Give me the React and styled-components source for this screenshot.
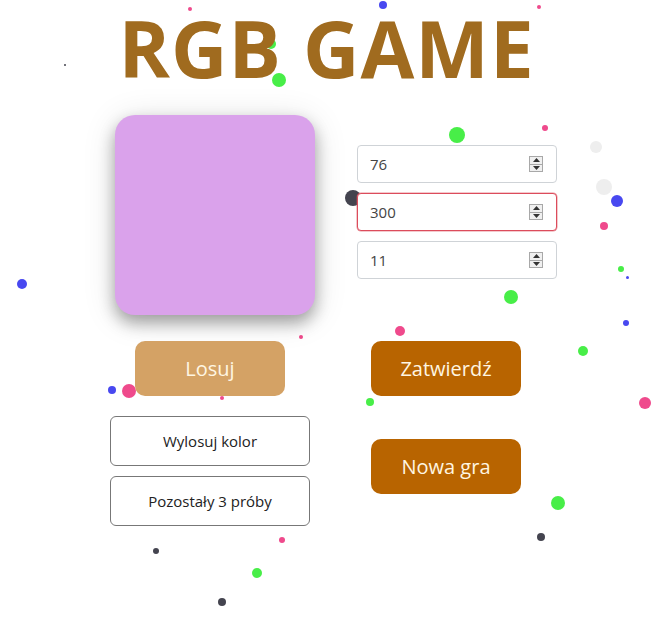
import React from 'react';
import styled, { createGlobalStyle } from 'styled-components';

const GlobalStyle = createGlobalStyle`
  html, body {
    margin: 0;
    padding: 0;
    background: #ffffff;
    font-family: "Open Sans", "Noto Sans", sans-serif;
  }
`;

// confetti dots floating behind the game
const dots = [
  { x: 190, y: 9, r: 2, c: '#ef4a8c' },
  { x: 383, y: 5, r: 4, c: '#4848f0' },
  { x: 539, y: 7, r: 2, c: '#ef4a8c' },
  { x: 65, y: 65, r: 1, c: '#44444f' },
  { x: 271, y: 44, r: 5, c: '#48ee48' },
  { x: 279, y: 80, r: 7, c: '#48ee48' },
  { x: 457, y: 135, r: 8, c: '#48ee48' },
  { x: 545, y: 128, r: 3, c: '#ef4a8c' },
  { x: 596, y: 147, r: 6, c: '#eeeeee' },
  { x: 604, y: 187, r: 8, c: '#eeeeee' },
  { x: 617, y: 201, r: 6, c: '#4848f0' },
  { x: 604, y: 226, r: 4, c: '#ef4a8c' },
  { x: 353, y: 198, r: 8, c: '#44444f' },
  { x: 22, y: 284, r: 5, c: '#4848f0' },
  { x: 621, y: 269, r: 3, c: '#48ee48' },
  { x: 627, y: 277, r: 1.5, c: '#4848f0' },
  { x: 511, y: 297, r: 7, c: '#48ee48' },
  { x: 626, y: 323, r: 3, c: '#4848f0' },
  { x: 301, y: 337, r: 2, c: '#ef4a8c' },
  { x: 400, y: 331, r: 5, c: '#ef4a8c' },
  { x: 583, y: 351, r: 5, c: '#48ee48' },
  { x: 112, y: 390, r: 4, c: '#4848f0' },
  { x: 129, y: 391, r: 7, c: '#ef4a8c' },
  { x: 222, y: 398, r: 2, c: '#ef4a8c' },
  { x: 370, y: 402, r: 4, c: '#48ee48' },
  { x: 645, y: 403, r: 6, c: '#ef4a8c' },
  { x: 558, y: 503, r: 7, c: '#48ee48' },
  { x: 541, y: 537, r: 4, c: '#44444f' },
  { x: 282, y: 540, r: 3, c: '#ef4a8c' },
  { x: 156, y: 551, r: 3, c: '#44444f' },
  { x: 257, y: 573, r: 5, c: '#48ee48' },
  { x: 222, y: 602, r: 4, c: '#44444f' },
];

const values = [
  { v: '76', invalid: false },
  { v: '300', invalid: true },
  { v: '11', invalid: false },
];

function Spinner() {
  return (
    <S.Spin>
      <S.SpinHalf>
        <svg width="7" height="4" viewBox="0 0 7 4">
          <path d="M0 4 L3.5 0 L7 4 Z" fill="#333" />
        </svg>
      </S.SpinHalf>
      <S.SpinHalf>
        <svg width="7" height="4" viewBox="0 0 7 4">
          <path d="M0 0 L3.5 4 L7 0 Z" fill="#333" />
        </svg>
      </S.SpinHalf>
    </S.Spin>
  );
}

export default function App() {
  return (
    <S.Page>
      <GlobalStyle />
      {dots.map((d, i) => (
        <S.Dot
          key={i}
          style={{
            left: d.x - d.r,
            top: d.y - d.r,
            width: d.r * 2,
            height: d.r * 2,
            background: d.c,
          }}
        />
      ))}
      <S.Content>
        <S.Title>RGB GAME</S.Title>
        <S.Board>
          <S.LeftColumn>
            <S.ColorBox $color="rgb(218, 162, 235)" />
            <S.GameButton $tone="light" $top={26}>Losuj</S.GameButton>
            <S.InfoButton $top={20}>Wylosuj kolor</S.InfoButton>
            <S.InfoButton $top={10}>Pozostały 3 próby</S.InfoButton>
          </S.LeftColumn>
          <S.RightColumn>
            <S.Inputs>
              {values.map((item, i) => (
                <S.Field key={i} $invalid={item.invalid}>
                  <S.NumberInput type="text" defaultValue={item.v} />
                  <Spinner />
                </S.Field>
              ))}
            </S.Inputs>
            <S.GameButton $top={62}>Zatwierdź</S.GameButton>
            <S.GameButton $top={43}>Nowa gra</S.GameButton>
          </S.RightColumn>
        </S.Board>
      </S.Content>
    </S.Page>
  );
}

const S = {
  Page: styled.div`
    position: relative;
    width: 100%;
    height: 619px;
    overflow: hidden;
  `,
  Dot: styled.span`
    position: absolute;
    border-radius: 50%;
    z-index: 0;
  `,
  Content: styled.div`
    position: relative;
    z-index: 1;
    display: flex;
    flex-direction: column;
  `,
  Title: styled.h1`
    margin: 1px 0 0;
    text-align: center;
    font-family: "Open Sans", "Noto Sans", sans-serif;
    font-weight: 700;
    font-size: 78px;
    line-height: 94px;
    letter-spacing: 1px;
    color: #a06b1f;
  `,
  Board: styled.div`
    display: grid;
    grid-template-columns: 200px 200px;
    column-gap: 47px;
    margin: 20px 0 0 110px;
  `,
  LeftColumn: styled.div`
    display: flex;
    flex-direction: column;
    align-items: center;
  `,
  RightColumn: styled.div`
    display: flex;
    flex-direction: column;
    align-items: flex-start;
    padding-top: 30px;
  `,
  ColorBox: styled.div`
    width: 200px;
    height: 200px;
    margin-left: 10px;
    border-radius: 20px;
    background: ${(p) => p.$color};
    box-shadow: 0 8px 16px rgba(0, 0, 0, 0.33), 0 4px 34px rgba(0, 0, 0, 0.12);
  `,
  Inputs: styled.div`
    display: flex;
    flex-direction: column;
    gap: 10px;
    width: 200px;
  `,
  Field: styled.label`
    display: flex;
    align-items: center;
    box-sizing: border-box;
    height: 38px;
    padding: 0 13px 0 12px;
    background: #ffffff;
    border: 1px solid ${(p) => (p.$invalid ? '#dc4c5c' : '#cfd3d7')};
    box-shadow: ${(p) => (p.$invalid ? '0 0 0 0.5px rgba(220, 76, 92, 0.6)' : 'none')};
    border-radius: 4px;
  `,
  NumberInput: styled.input`
    flex: 1;
    min-width: 0;
    border: none;
    outline: none;
    padding: 0;
    background: transparent;
    font-family: "Open Sans", "Noto Sans", sans-serif;
    font-size: 15px;
    color: #444;
  `,
  Spin: styled.span`
    display: flex;
    flex-direction: column;
    width: 14px;
    height: 16px;
    border: 1px solid #a8a8a8;
    box-sizing: border-box;
    background: #f0f0f0;
  `,
  SpinHalf: styled.span`
    flex: 1;
    display: flex;
    align-items: center;
    justify-content: center;
    & + & {
      border-top: 1px solid #a8a8a8;
    }
  `,
  GameButton: styled.button`
    width: 150px;
    height: 55px;
    margin-top: ${(p) => p.$top}px;
    margin-left: ${(p) => (p.$tone === 'light' ? '0' : '14px')};
    border: none;
    border-radius: 10px;
    background: ${(p) => (p.$tone === 'light' ? '#d4a265' : '#b86400')};
    color: #fff6e2;
    font-family: "Open Sans", "Noto Sans", sans-serif;
    font-size: 20px;
    cursor: pointer;
  `,
  InfoButton: styled.button`
    width: 200px;
    height: 50px;
    margin-top: ${(p) => p.$top}px;
    box-sizing: border-box;
    border: 1px solid #777;
    border-radius: 6px;
    background: #ffffff;
    color: #222;
    font-family: "Open Sans", "Noto Sans", sans-serif;
    font-size: 15px;
    cursor: pointer;
  `,
};
